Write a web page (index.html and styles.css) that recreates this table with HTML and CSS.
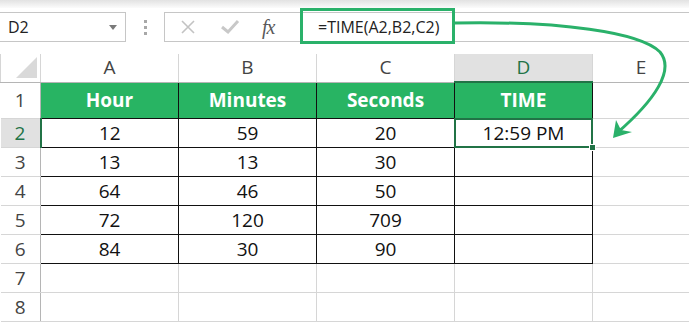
FILE: index.html
```html
<!DOCTYPE html>
<html>
<head>
<meta charset="utf-8">
<link rel="stylesheet" href="styles.css">
</head>
<body>
<div class="shade"></div>
<div class="fbar">
  <div class="namebox"><span class="ref">D2</span><span class="caret"></span></div>
  <div class="grip"><i></i><i></i><i></i></div>
  <div class="formula">
    <div class="btns">
      <svg class="ico" width="16" height="16" viewBox="0 0 16 16"><path d="M2 2 L14 14 M14 2 L2 14" stroke="#c3c3c3" stroke-width="1.6" fill="none"/></svg>
      <svg class="ico" width="20" height="16" viewBox="0 0 20 16"><path d="M2 8 L8 13 L18 2" stroke="#c8c8c8" stroke-width="3" fill="none"/></svg>
      <span class="fx">fx</span>
    </div>
    <div class="input">=TIME(A2,B2,C2)</div>
  </div>
</div>
<table class="sheet">
  <colgroup><col class="c0"><col class="cw"><col class="cw"><col class="cw"><col class="cw"><col class="ce"></colgroup>
  <tr class="hdr">
    <th class="corner"><span class="tri"></span></th><th>A</th><th>B</th><th>C</th><th class="hsel">D</th><th>E</th>
  </tr>
  <tr class="r1">
    <th class="rh">1</th><td class="g">Hour</td><td class="g">Minutes</td><td class="g">Seconds</td><td class="g">TIME</td><td></td>
  </tr>
  <tr class="r">
    <th class="rh rsel">2</th><td class="b">12</td><td class="b">59</td><td class="b">20</td><td class="b sel">12:59 PM</td><td></td>
  </tr>
  <tr class="r">
    <th class="rh">3</th><td class="b">13</td><td class="b">13</td><td class="b">30</td><td class="b"></td><td></td>
  </tr>
  <tr class="r">
    <th class="rh">4</th><td class="b">64</td><td class="b">46</td><td class="b">50</td><td class="b"></td><td></td>
  </tr>
  <tr class="r">
    <th class="rh">5</th><td class="b">72</td><td class="b">120</td><td class="b">709</td><td class="b"></td><td></td>
  </tr>
  <tr class="r">
    <th class="rh">6</th><td class="b">84</td><td class="b">30</td><td class="b">90</td><td class="b"></td><td></td>
  </tr>
  <tr class="r">
    <th class="rh">7</th><td></td><td></td><td></td><td></td><td></td>
  </tr>
  <tr class="r">
    <th class="rh">8</th><td></td><td></td><td></td><td></td><td></td>
  </tr>
</table>
<div class="hl"></div>
<svg class="arrow" width="689" height="323" viewBox="0 0 689 323">
  <path d="M455,23 C560,21 640,32 660,52 C675,70 655,100 617,133" stroke="#2ab16a" stroke-width="3" fill="none"/>
  <polygon points="613,138 616,120 621,130 632,132" fill="#2ab16a"/>
</svg>
</body>
</html>
```
FILE: styles.css
```css
html, body {
  margin: 0;
  padding: 0;
  background: #fff;
  width: 689px;
  height: 323px;
  overflow: hidden;
  position: relative;
  font-family: "Open Sans", "Liberation Sans", sans-serif;
}
.shade {
  height: 8px;
  background: linear-gradient(#e2e2e2, #fbfbfb);
}
.fbar {
  display: flex;
  align-items: center;
  margin-top: 4px;
  height: 30px;
}
.namebox {
  width: 126px;
  height: 30px;
  box-sizing: border-box;
  border: 1px solid #c6c6c6;
  border-left: none;
  display: flex;
  align-items: center;
  justify-content: space-between;
  padding: 0 8px 0 8px;
}
.ref {
  font-size: 16px;
  color: #222;
}
.caret {
  width: 0;
  height: 0;
  border-top: 5px solid #7a7a7a;
  border-left: 4px solid transparent;
  border-right: 4px solid transparent;
}
.grip {
  margin-left: 18px;
  display: flex;
  flex-direction: column;
  gap: 3px;
}
.grip i {
  display: block;
  width: 3px;
  height: 3px;
  background: #a8a8a8;
}
.formula {
  margin-left: 17px;
  flex: 1;
  height: 30px;
  box-sizing: border-box;
  border: 1px solid #c6c6c6;
  border-right: none;
  display: flex;
  align-items: center;
}
.btns {
  width: 135px;
  display: flex;
  align-items: center;
  padding-left: 15px;
  box-sizing: border-box;
}
.btns .ico:nth-child(1) { margin-right: 24px; }
.btns .ico:nth-child(2) { margin-right: 22px; }
.fx {
  font-family: "Liberation Serif", "DejaVu Serif", serif;
  font-style: italic;
  font-size: 20px;
  color: #5a5a5a;
  letter-spacing: -1px;
}
.input {
  padding-left: 18px;
  font-size: 16px;
  color: #222;
}
.sheet {
  margin-top: 12px;
  border-collapse: collapse;
  table-layout: fixed;
  width: 689px;
}
.c0 { width: 40px; }
.cw { width: 138px; }
.ce { width: 97px; }
.sheet th, .sheet td {
  padding: 0;
  text-align: center;
  vertical-align: middle;
  font-size: 19px;
  line-height: 1;
  border: 1px solid #d6d6d6;
}
.sheet th {
  font-weight: normal;
  color: #444;
}
.hdr th {
  height: 27px;
  border-top: none;
  border-bottom: 1px solid #b5b5b5;
}
.corner {
  position: relative;
}
.tri {
  position: absolute;
  right: 3px;
  bottom: 4px;
  width: 0;
  height: 0;
  border-bottom: 21px solid #d9d9d9;
  border-left: 21px solid transparent;
}
.hsel {
  background: #e1e1e1;
  color: #217346 !important;
  border-bottom: 2px solid #217346 !important;
}
.rh {
  border-left: none !important;
  border-right: 1px solid #b5b5b5 !important;
}
.rsel {
  background: #e1e1e1;
  color: #217346 !important;
  border-right: 2px solid #217346 !important;
}
.r1 th, .r1 td { height: 35px; }
.r th, .r td { height: 28px; }
.g {
  background: #28b463;
  color: #fff;
  font-weight: bold;
  border: 1px solid #111 !important;
}
.b {
  color: #111;
  border: 1px solid #111 !important;
}
.sel {
  position: relative;
}
.sel::before {
  content: "";
  position: absolute;
  left: -1px;
  top: -1px;
  right: -1px;
  bottom: -1px;
  border: 2px solid #217346;
}
.sel::after {
  content: "";
  position: absolute;
  right: -4px;
  bottom: -4px;
  width: 5px;
  height: 5px;
  background: #217346;
  border: 1px solid #fff;
}
.hl {
  position: absolute;
  left: 300px;
  top: 8px;
  width: 155px;
  height: 36px;
  box-sizing: border-box;
  border: 3px solid #2ab16a;
}
.arrow {
  position: absolute;
  left: 0;
  top: 0;
  pointer-events: none;
}
```
